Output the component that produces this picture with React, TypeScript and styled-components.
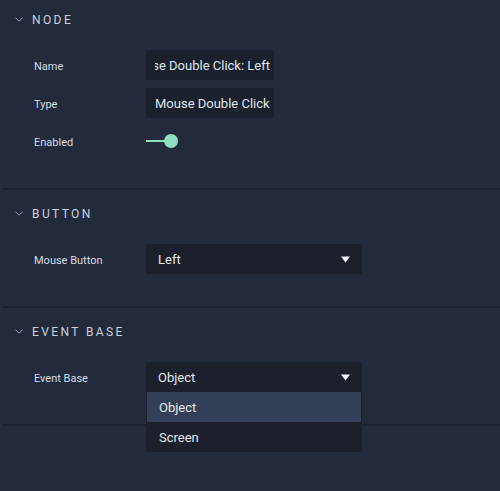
import React from "react";
import styled, { createGlobalStyle } from "styled-components";

const Global = createGlobalStyle`
  html, body { margin: 0; padding: 0; background: #222b3b; }
  body { font-family: Roboto, "Liberation Sans", sans-serif; -webkit-font-smoothing: antialiased; }
  * { box-sizing: border-box; }
`;

const Panel = styled.div`
  width: 500px;
  height: 491px;
  background: #222b3b;
  display: flex;
  flex-direction: column;
`;

const Section = styled.section<{ $top: number }>`
  padding: ${(p) => p.$top}px 0 32px;
  position: relative;
`;

const Divider = styled.div`
  height: 2px;
  margin-left: 2px;
  background: #1b2230;
`;

const Header = styled.div`
  height: 22px;
  display: flex;
  align-items: center;
  padding: 1px 0 0 15px;
  gap: 9px;
  margin-bottom: 20px;
`;

const Title = styled.span`
  font-size: 12px;
  letter-spacing: 2.4px;
  color: #c9d2de;
  font-weight: 400;
`;

const Rows = styled.div`
  display: flex;
  flex-direction: column;
  gap: 8px;
`;

const Row = styled.div`
  display: flex;
  align-items: center;
  height: 30px;
  position: relative;
`;

const Label = styled.div`
  width: 146px;
  padding: 2px 0 0 34px;
  font-size: 11px;
  color: #d6dce6;
`;

const InputBox = styled.div`
  width: 128px;
  height: 30px;
  background: #1b212c;
  border-radius: 2px;
  padding: 1px 4px 0 9px;
  display: flex;
  align-items: center;
`;

const InputClip = styled.div<{ $end?: boolean }>`
  flex: 1;
  overflow: hidden;
  display: flex;
  justify-content: ${(p) => (p.$end ? "flex-end" : "flex-start")};
`;

const InputText = styled.span`
  white-space: nowrap;
  font-size: 13px;
  color: #dfe6ef;
`;

const Toggle = styled.div`
  display: flex;
  align-items: center;
`;

const Track = styled.div`
  width: 20px;
  height: 2px;
  background: #8ee0c0;
`;

const Knob = styled.div`
  width: 14px;
  height: 14px;
  border-radius: 50%;
  background: #8ee0c0;
  margin-left: -2px;
`;

const SelectWrap = styled.div`
  position: relative;
  width: 216px;
`;

const SelectBox = styled.div<{ $open?: boolean }>`
  height: 30px;
  background: #1b202a;
  border-radius: ${(p) => (p.$open ? "2px 2px 0 0" : "2px")};
  display: flex;
  align-items: center;
  justify-content: space-between;
  padding: 1px 12px 0 12px;
  font-size: 13px;
  color: #e3e8f0;
`;

const Menu = styled.div`
  position: absolute;
  top: 30px;
  left: 0;
  right: 0;
  background: #1b202a;
  border-radius: 0 0 3px 3px;
  padding: 0 1px;
  z-index: 2;
`;

const Option = styled.div<{ $active?: boolean }>`
  height: 30px;
  display: flex;
  align-items: center;
  padding: 1px 0 0 12px;
  font-size: 13px;
  color: #e3e8f0;
  background: ${(p) => (p.$active ? "#344057" : "transparent")};
`;

const Chevron = () => (
  <svg width="8" height="5" viewBox="0 0 8 5" style={{ display: "block" }}>
    <polyline points="0.5,0.7 4,4.2 7.5,0.7" fill="none" stroke="#9aa5b5" strokeWidth="1" />
  </svg>
);

const Caret = () => (
  <svg width="9" height="7" viewBox="0 0 9 7" style={{ display: "block" }}>
    <polygon points="0,0.5 9,0.5 4.5,6.5" fill="#f2f4f7" />
  </svg>
);

const SectionHeader = ({ title }: { title: string }) => (
  <Header>
    <Chevron />
    <Title>{title}</Title>
  </Header>
);

export default function App() {
  return (
    <>
      <Global />
      <Panel>
        <Section $top={8}>
          <SectionHeader title="NODE" />
          <Rows>
            <Row>
              <Label>Name</Label>
              <InputBox>
                <InputClip $end>
                  <InputText>Mouse Double Click: Left</InputText>
                </InputClip>
              </InputBox>
            </Row>
            <Row>
              <Label>Type</Label>
              <InputBox>
                <InputClip>
                  <InputText>Mouse Double Click</InputText>
                </InputClip>
              </InputBox>
            </Row>
            <Row>
              <Label>Enabled</Label>
              <Toggle>
                <Track />
                <Knob />
              </Toggle>
            </Row>
          </Rows>
        </Section>
        <Divider />
        <Section $top={12}>
          <SectionHeader title="BUTTON" />
          <Rows>
            <Row>
              <Label>Mouse Button</Label>
              <SelectWrap>
                <SelectBox>
                  <span>Left</span>
                  <Caret />
                </SelectBox>
              </SelectWrap>
            </Row>
          </Rows>
        </Section>
        <Divider />
        <Section $top={12}>
          <SectionHeader title="EVENT BASE" />
          <Rows>
            <Row>
              <Label>Event Base</Label>
              <SelectWrap>
                <SelectBox $open>
                  <span>Object</span>
                  <Caret />
                </SelectBox>
                <Menu>
                  <Option $active>Object</Option>
                  <Option>Screen</Option>
                </Menu>
              </SelectWrap>
            </Row>
          </Rows>
        </Section>
        <Divider />
      </Panel>
    </>
  );
}
